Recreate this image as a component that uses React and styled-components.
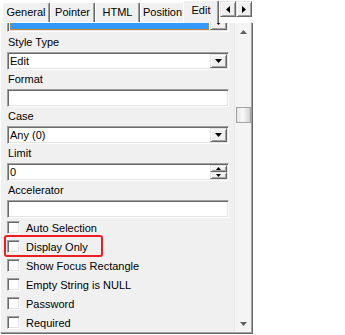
import React from "react";
import styled, { createGlobalStyle } from "styled-components";

const tabs = ["General", "Pointer", "HTML", "Position", "Edit"];
const activeTab = "Edit";

const fields = [
  { label: "Style Type", kind: "combo", value: "Edit" },
  { label: "Format", kind: "text", value: "" },
  { label: "Case", kind: "combo", value: "Any (0)" },
  { label: "Limit", kind: "spin", value: "0" },
  { label: "Accelerator", kind: "text", value: "" },
];

const checks = [
  { label: "Auto Selection" },
  { label: "Display Only", marked: true },
  { label: "Show Focus Rectangle" },
  { label: "Empty String is NULL" },
  { label: "Password" },
  { label: "Required" },
];

// how far the property page is scrolled, 0..1
const scrollRatio = 0.26;
const TRACK = 275;
const THUMB = 16;

const Arrow = ({ dir, size = 7, color = "#000" }) => {
  const h = Math.ceil(size / 2);
  const pts = {
    down: `0,0 ${size},0 ${size / 2},${h}`,
    up: `0,${h} ${size},${h} ${size / 2},0`,
    left: `${h},0 ${h},${size} 0,${size / 2}`,
    right: `0,0 0,${size} ${h},${size / 2}`,
  }[dir];
  const vertical = dir === "up" || dir === "down";
  return (
    <svg width={vertical ? size : h} height={vertical ? h : size} style={{ display: "block" }}>
      <polygon points={pts} fill={color} />
    </svg>
  );
};

const Combo = ({ value, selected }) => (
  <Field>
    {/* the selected combo is scrolled mostly out of view, only its highlight shows */}
    {selected ? <Selection /> : <FieldText>{value}</FieldText>}
    <DropButton>
      <Arrow dir="down" />
    </DropButton>
  </Field>
);

const Spin = ({ value }) => (
  <Field>
    <FieldText>{value}</FieldText>
    <SpinStack>
      <SpinButton>
        <Arrow dir="up" size={5} />
      </SpinButton>
      <SpinButton>
        <Arrow dir="down" size={5} />
      </SpinButton>
    </SpinStack>
  </Field>
);

const renderField = (f) => {
  if (f.kind === "combo") return <Combo value={f.value} />;
  if (f.kind === "spin") return <Spin value={f.value} />;
  return (
    <Field>
      <FieldText>{f.value}</FieldText>
    </Field>
  );
};

export default function App() {
  const thumbOffset = Math.round(scrollRatio * (TRACK - THUMB));

  return (
    <>
      <GlobalStyle />
      <Page>
        <PropertySheet>
          <TabStrip>
            {tabs.map((t) => (
              <Tab key={t} $active={t === activeTab} $wide={t === "General"}>
                {t}
              </Tab>
            ))}
            <TabScroller>
              <ArrowButton>
                <Arrow dir="left" />
              </ArrowButton>
              <ArrowButton>
                <Arrow dir="right" />
              </ArrowButton>
            </TabScroller>
          </TabStrip>

          <TabBody>
            <Content>
              <Clipped>
                <Combo value="Edit" selected />
              </Clipped>

              {fields.map((f) => (
                <React.Fragment key={f.label}>
                  <Label>{f.label}</Label>
                  {renderField(f)}
                </React.Fragment>
              ))}

              {checks.map((c) => (
                <CheckRow key={c.label}>
                  <CheckBox />
                  <span>{c.label}</span>
                  {c.marked && <Marker />}
                </CheckRow>
              ))}
            </Content>

            <ScrollBar>
              <ScrollButton>
                <Arrow dir="up" size={7} color="#606060" />
              </ScrollButton>
              <Track>
                <Thumb style={{ marginTop: thumbOffset }} />
              </Track>
              <ScrollButton>
                <Arrow dir="down" size={7} color="#606060" />
              </ScrollButton>
            </ScrollBar>
          </TabBody>
        </PropertySheet>
      </Page>
    </>
  );
}

// Styled components

const GlobalStyle = createGlobalStyle`
  html, body {
    margin: 0;
    padding: 0;
    background: #fff;
  }
  body {
    font-family: "Liberation Sans", Arial, sans-serif;
    font-size: 11px;
    color: #000;
  }
`;

const Page = styled.div`
  width: 345px;
  height: 335px;
  display: flex;
  background: #fff;
  overflow: hidden;
`;

const PropertySheet = styled.div`
  width: 252px;
  display: flex;
  flex-direction: column;
`;

const TabStrip = styled.div`
  height: 22px;
  display: flex;
  align-items: flex-end;
  padding-left: 2px;
  box-sizing: border-box;
`;

const Tab = styled.div`
  position: relative;
  box-sizing: border-box;
  width: ${(p) => (p.$active ? "36px" : p.$wide ? "48px" : "45px")};
  height: ${(p) => (p.$active ? "23px" : "20px")};
  margin: ${(p) => (p.$active ? "0 0 -1px -2px" : "0")};
  z-index: ${(p) => (p.$active ? 1 : 0)};
  padding-bottom: ${(p) => (p.$active ? "4px" : "1px")};
  background: #f0f0f0;
  border-top: 1px solid #fff;
  border-left: 1px solid #fff;
  border-right: 1px solid #696969;
  border-radius: 2px 2px 0 0;
  box-shadow: inset -1px 0 #a0a0a0;
  display: flex;
  align-items: center;
  justify-content: center;
  line-height: 18px;
  white-space: nowrap;
`;

const TabScroller = styled.div`
  align-self: flex-start;
  margin: 1px 0 0 auto;
  display: flex;
`;

const ArrowButton = styled.div`
  width: 16px;
  height: 16px;
  box-sizing: border-box;
  background: #f0f0f0;
  border: 1px solid;
  border-color: #e3e3e3 #696969 #696969 #e3e3e3;
  box-shadow: inset 1px 1px #fff, inset -1px -1px #a0a0a0;
  display: flex;
  align-items: center;
  justify-content: center;
`;

const TabBody = styled.div`
  height: 311px;
  box-sizing: border-box;
  display: flex;
  background: #f0f0f0;
  border-top: 1px solid #fff;
  border-left: 1px solid #fff;
  border-right: 1px solid #a0a0a0;
  border-bottom: 1px solid #a0a0a0;
  box-shadow: 1px 1px 0 #696969;
`;

const Content = styled.div`
  flex: 1;
  min-width: 0;
  display: flex;
  flex-direction: column;
  padding: 0 5px 0 6px;
  overflow: hidden;
`;

const Clipped = styled.div`
  height: 10px;
  flex-shrink: 0;
  display: flex;
  flex-direction: column;
  justify-content: flex-end;
  overflow: hidden;
  padding-bottom: 1px;
  box-sizing: border-box;
`;

const Label = styled.div`
  height: 19px;
  flex-shrink: 0;
  line-height: 19px;
  padding-left: 1px;
`;

const Field = styled.div`
  height: 18px;
  flex-shrink: 0;
  box-sizing: border-box;
  display: flex;
  align-items: stretch;
  padding: 1px;
  background: #fff;
  border: 1px solid;
  border-color: #a0a0a0 #fff #fff #a0a0a0;
  box-shadow: inset 1px 1px #696969, inset -1px -1px #e3e3e3;
`;

const FieldText = styled.div`
  flex: 1;
  line-height: 14px;
  padding-left: 1px;
  white-space: nowrap;
`;

const Selection = styled.div`
  flex: 1;
  margin: 0 1px 0 1px;
  background: #3399ff;
  outline: 1px dotted #d08a30;
  outline-offset: -1px;
`;

const DropButton = styled.div`
  width: 17px;
  box-sizing: border-box;
  background: #f0f0f0;
  border: 1px solid;
  border-color: #e3e3e3 #696969 #696969 #e3e3e3;
  box-shadow: inset 1px 1px #fff, inset -1px -1px #a0a0a0;
  display: flex;
  align-items: center;
  justify-content: center;
`;

const SpinStack = styled.div`
  width: 17px;
  display: flex;
  flex-direction: column;
`;

const SpinButton = styled(DropButton)`
  width: 100%;
  flex: 1;
`;

const CheckRow = styled.div`
  position: relative;
  height: 19px;
  flex-shrink: 0;
  display: flex;
  align-items: center;
  gap: 6px;
  white-space: nowrap;
`;

const CheckBox = styled.div`
  width: 13px;
  height: 13px;
  box-sizing: border-box;
  flex-shrink: 0;
  background: #fff;
  border: 1px solid;
  border-color: #a0a0a0 #fff #fff #a0a0a0;
  box-shadow: inset 1px 1px #696969, inset -1px -1px #e3e3e3;
`;

const Marker = styled.div`
  position: absolute;
  left: -3px;
  top: -2px;
  width: 99px;
  height: 22px;
  box-sizing: border-box;
  border: 2px solid #ee1d23;
  border-radius: 3px;
  pointer-events: none;
`;

const ScrollBar = styled.div`
  width: 17px;
  flex-shrink: 0;
  display: flex;
  flex-direction: column;
  background: #f4f4f4;
  border-left: 1px solid #e8e8e8;
  box-sizing: border-box;
`;

const ScrollButton = styled.div`
  height: 17px;
  flex-shrink: 0;
  display: flex;
  align-items: center;
  justify-content: center;
`;

const Track = styled.div`
  flex: 1;
  display: flex;
  flex-direction: column;
  align-items: center;
`;

const Thumb = styled.div`
  width: 15px;
  height: ${THUMB}px;
  box-sizing: border-box;
  border: 1px solid #a3a3a3;
  background: linear-gradient(to right, #e4e4e4, #fafafa 45%, #d2d2d2);
`;
